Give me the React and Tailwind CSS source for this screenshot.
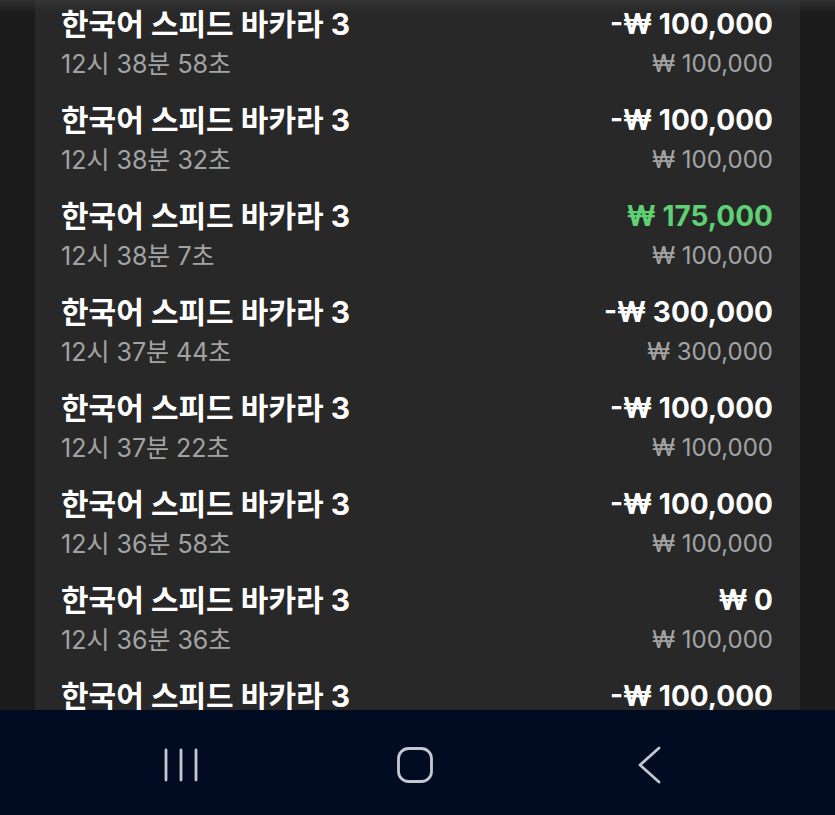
import React from 'react';

const rows = [
  { time: '12시 38분 58초', win: '-₩ 100,000', bet: '₩ 100,000' },
  { time: '12시 38분 32초', win: '-₩ 100,000', bet: '₩ 100,000' },
  { time: '12시 38분 7초', win: '₩ 175,000', bet: '₩ 100,000', plus: true },
  { time: '12시 37분 44초', win: '-₩ 300,000', bet: '₩ 300,000' },
  { time: '12시 37분 22초', win: '-₩ 100,000', bet: '₩ 100,000' },
  { time: '12시 36분 58초', win: '-₩ 100,000', bet: '₩ 100,000' },
  { time: '12시 36분 36초', win: '₩ 0', bet: '₩ 100,000' },
  { time: '12시 36분 14초', win: '-₩ 100,000', bet: '₩ 100,000' },
];

const font = { fontFamily: '"Inter", "Noto Sans CJK KR", sans-serif' };

function Row({ r }) {
  return (
    <div className="flex justify-between pt-[6px] pb-[10px]">
      <div className="whitespace-nowrap">
        <div className="text-[30px] leading-[36px] font-bold text-white">한국어 스피드 바카라 3</div>
        <div className="text-[25px] leading-[44px] text-[#a3a3a3]">{r.time}</div>
      </div>
      <div className="text-right whitespace-nowrap">
        <div className={'text-[28px] leading-[36px] font-bold ' + (r.plus ? 'text-[#5ed174]' : 'text-white')}>{r.win}</div>
        <div className="text-[24px] leading-[44px] text-[#a3a3a3]">{r.bet}</div>
      </div>
    </div>
  );
}

export default function App() {
  return (
    <div className="w-[835px] h-[815px] bg-[#1c1c1c] flex flex-col overflow-hidden" style={font}>
      <div className="relative h-[710px] overflow-hidden">
        <div className="mx-[35px] h-full bg-[#282828] pl-[26px] pr-[27px]">
          {rows.map((r, i) => (
            <Row key={i} r={r} />
          ))}
        </div>
        <div className="absolute top-0 left-0 right-0 h-[12px] bg-gradient-to-b from-[#3a3a3a] to-transparent opacity-70" />
      </div>
      <div className="flex-1 bg-[#010c22] flex items-center pl-[64px] pt-[4px]">
        <div className="w-[234px] flex justify-center">
          <svg width="40" height="40" viewBox="0 0 40 40" fill="none" stroke="#c5c8cf" strokeWidth="2.8" strokeLinecap="round">
            <path d="M5 5v30M20 5v30M35 5v30" />
          </svg>
        </div>
        <div className="w-[234px] flex justify-center">
          <svg width="40" height="40" viewBox="0 0 40 40" fill="none" stroke="#c5c8cf" strokeWidth="2.8">
            <rect x="3.5" y="3.5" width="33" height="33" rx="10" />
          </svg>
        </div>
        <div className="w-[234px] flex justify-center">
          <svg width="40" height="40" viewBox="0 0 40 40" fill="none" stroke="#c5c8cf" strokeWidth="2.8" strokeLinecap="round" strokeLinejoin="round">
            <path d="M30 3L11 20l19 17" />
          </svg>
        </div>
      </div>
    </div>
  );
}
